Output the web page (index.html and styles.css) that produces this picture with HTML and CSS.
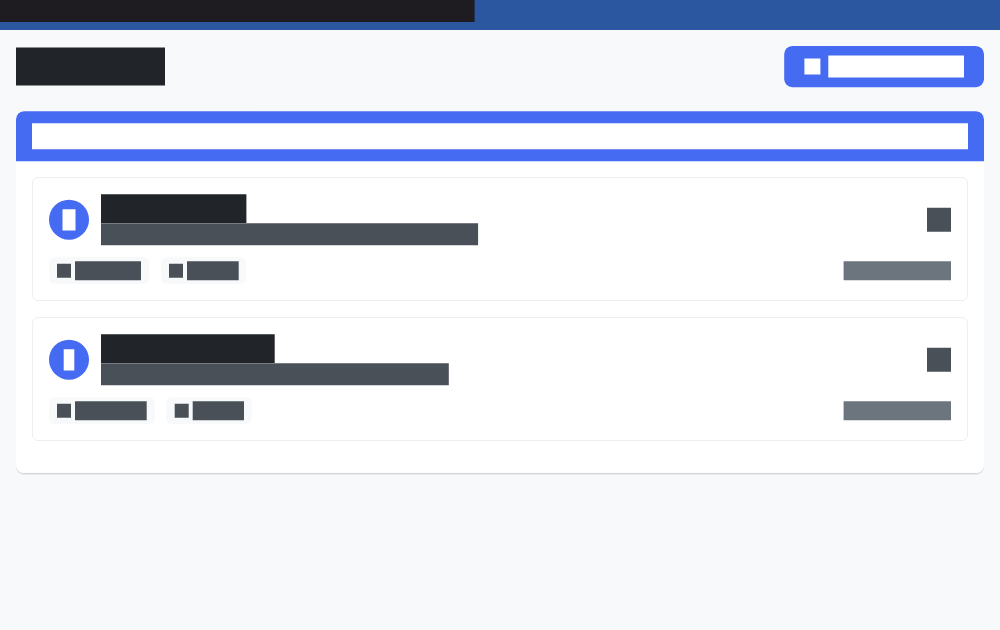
FILE: index.html
```html
<!DOCTYPE html>
<html lang="en">
<head>
<meta charset="utf-8">
<title>List</title>
<link rel="stylesheet" href="styles.css">
</head>
<body>
<header class="topbar"><div class="bar topbar-label"></div></header>
<main class="page">
  <div class="page-head">
    <div class="bar page-title"></div>
    <div class="button"><div class="bar button-icon"></div><div class="bar button-label"></div></div>
  </div>
  <section class="panel">
    <div class="panel-head"><div class="bar panel-title"></div></div>
    <div class="panel-body">
      <article class="card">
        <div class="card-head">
          <div class="avatar"><div class="bar initial"></div></div>
          <div class="info"><div class="bar name name-a"></div><div class="bar detail detail-a"></div></div>
          <div class="bar menu"></div>
        </div>
        <div class="card-foot">
          <div class="tag tag-a"><div class="bar tag-icon"></div><div class="bar tag-text text-a"></div></div>
          <div class="tag tag-b"><div class="bar tag-icon"></div><div class="bar tag-text text-b"></div></div>
          <div class="bar date"></div>
        </div>
      </article>
      <article class="card">
        <div class="card-head">
          <div class="avatar"><div class="bar initial initial-narrow"></div></div>
          <div class="info"><div class="bar name name-b"></div><div class="bar detail detail-b"></div></div>
          <div class="bar menu"></div>
        </div>
        <div class="card-foot">
          <div class="tag tag-c"><div class="bar tag-icon"></div><div class="bar tag-text text-c"></div></div>
          <div class="tag tag-d"><div class="bar tag-icon icon-d"></div><div class="bar tag-text text-d"></div></div>
          <div class="bar date"></div>
        </div>
      </article>
    </div>
  </section>
</main>
</body>
</html>
```

FILE: styles.css
```css
* { box-sizing: border-box; }
body { margin: 0; min-height: 630px; background: #f8f9fb; font-family: "Liberation Sans", sans-serif; }

/* Bars trim to fractional sizes through their edge insets. */
.bar { --t: 0px; --r: 0px; --b: 0px; --l: 0px; flex: none; clip-path: inset(var(--t) var(--r) var(--b) var(--l)); }

.topbar { height: 30px; background: #2b56a0; }
.topbar-label { width: 475px; height: 22px; background: #1e1c20; --r: .4px; }

.page { padding: 16px; }
.page-head { display: flex; justify-content: space-between; height: 42px; margin-bottom: 23px; }
.page-title { width: 149px; height: 39px; margin-top: 1px; background: #212529; --t: .6px; --b: .4px; }
.button { display: flex; width: 200px; height: 42px; padding: 9px 20px; background: #466bf3; border-radius: 8px; clip-path: inset(0 0 .8px .2px round 8px); }
.button-icon { width: 17px; height: 17px; margin: 3px 7px 0 0; background: #fff; --t: .6px; --b: .4px; --l: .4px; --r: .6px; }
.button-label { width: 136px; height: 23px; background: #fff; --t: .4px; --b: .4px; --l: .3px; }

/* The white base starts below the header's rounded corners. */
.panel { height: 362px; background: linear-gradient(to bottom, transparent 10px, #fff 10px); border-radius: 8px; box-shadow: 0 1px 0 rgba(0, 0, 0, .09), 0 2px 0 rgba(0, 0, 0, .06); }
.panel-head { height: 51px; padding: 12px 16px; background: #466bf3; border-radius: 8px 8px 0 0; clip-path: inset(.2px 0 .8px 0 round 8px 8px 0 0); }
.panel-title { height: 27px; background: #fff; --t: .2px; --b: .75px; }
.panel-body { display: flex; flex-direction: column; gap: 16px; padding: 15px 16px 0; }

.card { height: 124px; padding: 16px; border: 1px solid #eceef0; border-radius: 6px; background: #fff; }
.card-head { display: flex; align-items: flex-start; height: 52px; }
.avatar { flex: none; display: flex; justify-content: center; width: 40px; height: 41px; margin: 5px 12px 0 0; padding-top: 10px; background: #466bf3; clip-path: circle(20px at 20px 20.7px); }
.initial { width: 14px; height: 22px; background: #fff; --t: .2px; --b: .6px; --l: .5px; --r: .5px; }
.initial-narrow { width: 12px; --l: .7px; --r: .7px; }
.info { flex: 1; }
.name { height: 29px; background: #212529; --t: .2px; }
.name-a { width: 146px; --r: .6px; }
.name-b { width: 174px; --r: .3px; }
.detail { height: 23px; background: #495057; --t: .2px; --b: .8px; }
.detail-a { width: 378px; --r: .9px; }
.detail-b { width: 348px; --r: .2px; }
.menu { width: 24px; height: 25px; margin-top: 13px; background: #495057; --t: .7px; --b: .3px; }

.card-foot { display: flex; align-items: flex-start; margin-top: 11px; }
.tag { display: flex; flex: none; gap: 4px; height: 27px; margin-right: 12px; padding: 4px 8px; background: #f8f9fa; border-radius: 6px; }
.tag-a { width: 100px; }
.tag-b { width: 85px; }
.tag-c { width: 106px; }
.tag-d { width: 86px; margin-left: -1px; }
.tag-icon { width: 14px; height: 15px; margin-top: 2px; background: #495057; --t: .7px; --b: .3px; }
.icon-d { width: 15px; --l: .7px; --r: .3px; margin-right: -1px; }
.tag-text { height: 20px; background: #495057; --t: .2px; --b: .8px; }
.text-a { width: 66px; }
.text-b { width: 52px; --r: .3px; }
.text-c { width: 72px; --r: .3px; }
.text-d { width: 52px; --l: .7px; }
.date { width: 108px; height: 20px; margin: 4px 0 0 auto; background: #6c757d; --t: .2px; --b: .8px; --l: .6px; }
```
